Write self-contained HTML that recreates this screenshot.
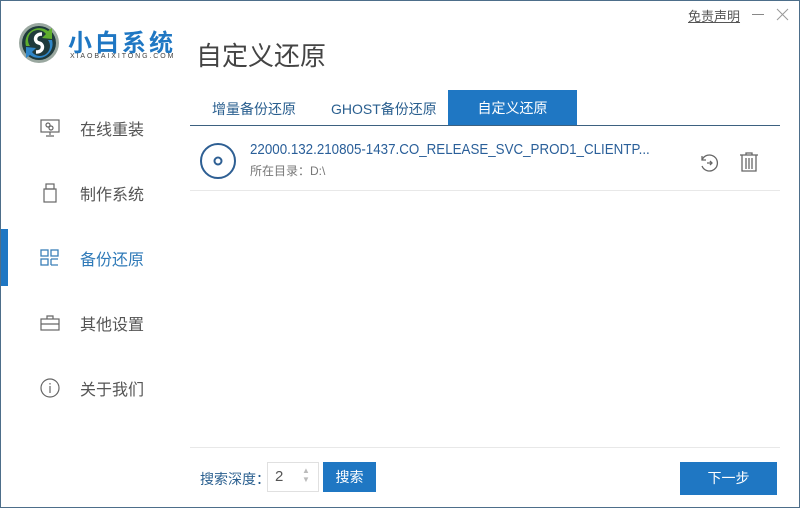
<!DOCTYPE html>
<html><head><meta charset="utf-8"><style>
*{margin:0;padding:0;box-sizing:border-box}
body{width:800px;height:508px;overflow:hidden;background:#fff;font-family:"Liberation Sans","Noto Sans CJK SC",sans-serif;position:relative}
.frame{position:absolute;left:0;top:0;width:800px;height:508px;border:1px solid #4d6e8a;pointer-events:none;z-index:10}
.a{position:absolute;white-space:nowrap}
.nav{font-size:16px;color:#555}
.ic{position:absolute}
</style></head><body>
<div class="frame"></div>
<svg class="ic" style="left:18px;top:22px" width="42" height="42" viewBox="0 0 42 42">
<circle cx="21" cy="21" r="20" fill="#9aa8a0"/>
<circle cx="21" cy="21" r="17" fill="#1f3a3c"/>
<path d="M8 24 A14 14 0 0 1 30 9 L34 6 L34 17 L24 16 L28 12 A10 10 0 0 0 12 24Z" fill="#5fae2e"/>
<path d="M34 18 A14 14 0 0 1 12 33 L8 36 L8 25 L18 26 L14 30 A10 10 0 0 0 30 18Z" fill="#2f86c8"/>
<path d="M24 12 C16 12 16 20 21 21 C26 22 26 30 18 30" stroke="#fff" stroke-width="3.5" fill="none"/>
</svg>
<div class="a" style="left:68px;top:23px;font-size:24px;color:#1f77c3;font-weight:bold;letter-spacing:3px">小白系统</div>
<div class="a" style="left:70px;top:53px;font-size:7px;color:#444;letter-spacing:1.9px">XIAOBAIXITONG.COM</div>
<div class="a" style="left:196px;top:36px;font-size:26px;color:#444">自定义还原</div>
<div class="a" style="left:688px;top:6px;font-size:13px;color:#555;text-decoration:underline">免责声明</div>
<div class="a" style="left:752px;top:14px;width:12px;height:1px;background:#888"></div>
<svg class="ic" style="left:776px;top:8px" width="13" height="13"><path d="M1 1L12 12M12 1L1 12" stroke="#999" stroke-width="1"/></svg>
<div class="a" style="left:0;top:229px;width:8px;height:57px;background:#1f77c3"></div>
<svg class="ic" style="left:40px;top:119px" width="20" height="18" viewBox="0 0 20 18" fill="none" stroke="#666" stroke-width="1.2"><rect x="1" y="1" width="18" height="12"/><path d="M10 13v3M6 17h8"/><circle cx="8" cy="6" r="2"/><circle cx="11" cy="9" r="2"/></svg>
<div class="a nav" style="left:80px;top:116px">在线重装</div>
<svg class="ic" style="left:43px;top:183px" width="14" height="20" viewBox="0 0 14 20" fill="none" stroke="#666" stroke-width="1.2"><rect x="3" y="1" width="8" height="5"/><rect x="1" y="6" width="12" height="13"/></svg>
<div class="a nav" style="left:80px;top:181px">制作系统</div>
<svg class="ic" style="left:40px;top:249px" width="20" height="18" viewBox="0 0 20 18" fill="none" stroke="#3a7fb8" stroke-width="1.3"><rect x="1" y="1" width="7" height="6"/><rect x="11" y="1" width="7" height="6"/><rect x="1" y="10" width="7" height="6"/><path d="M11 10h7M11 16h7M11 10v6"/></svg>
<div class="a nav" style="left:80px;top:246px;color:#2f7ab8">备份还原</div>
<svg class="ic" style="left:40px;top:315px" width="20" height="16" viewBox="0 0 20 16" fill="none" stroke="#666" stroke-width="1.2"><rect x="1" y="4" width="18" height="11"/><path d="M7 4V1h6v3M1 9h18"/></svg>
<div class="a nav" style="left:80px;top:311px">其他设置</div>
<svg class="ic" style="left:40px;top:378px" width="20" height="20" viewBox="0 0 20 20" fill="none" stroke="#666" stroke-width="1.2"><circle cx="10" cy="10" r="9"/><path d="M10 8v7M10 5v1.5"/></svg>
<div class="a nav" style="left:80px;top:376px">关于我们</div>
<div class="a" style="left:212px;top:99px;font-size:14px;color:#2a5f8f">增量备份还原</div>
<div class="a" style="left:331px;top:99px;font-size:14px;color:#2a5f8f">GHOST备份还原</div>
<div class="a" style="left:448px;top:90px;width:129px;height:35px;background:#1f77c3;color:#fff;font-size:14px;text-align:center;line-height:36px">自定义还原</div>
<div class="a" style="left:190px;top:125px;width:590px;height:1px;background:#3d6180"></div>
<svg class="ic" style="left:199px;top:142px" width="38" height="38" viewBox="0 0 38 38" fill="none" stroke="#2e5f93" stroke-width="2"><circle cx="19" cy="19" r="17"/><circle cx="19" cy="19" r="3.5"/></svg>
<div class="a" style="left:250px;top:141px;font-size:15px;color:#2a5f99;transform:scaleX(0.89);transform-origin:0 0">22000.132.210805-1437.CO_RELEASE_SVC_PROD1_CLIENTP...</div>
<div class="a" style="left:250px;top:162px;font-size:12px;color:#777">所在目录：D:\</div>
<svg class="ic" style="left:699px;top:153px" width="20" height="20" viewBox="0 0 20 20" fill="none" stroke="#666" stroke-width="1.3"><path d="M3 7A8 8 0 1 1 3 13"/><path d="M3 3v4h4"/><path d="M8 10h5M11 8l2 2-2 2"/></svg>
<svg class="ic" style="left:739px;top:152px" width="20" height="20" viewBox="0 0 20 20" fill="none" stroke="#666" stroke-width="1.3"><path d="M1 3h18M7 3V1h6v2M3 3v16h14V3M7 6v11M10 6v11M13 6v11"/></svg>
<div class="a" style="left:190px;top:190px;width:590px;height:1px;background:#e8e8e8"></div>
<div class="a" style="left:190px;top:447px;width:590px;height:1px;background:#e8e8e8"></div>
<div class="a" style="left:200px;top:469px;font-size:14px;color:#2a5f8f">搜索深度：</div>
<div class="a" style="left:267px;top:462px;width:52px;height:30px;border:1px solid #e0e0e0;font-size:15px;color:#555;padding:5px 0 0 7px">2</div>
<div class="a" style="left:302px;top:466px;font-size:8px;color:#bbb;line-height:9px">▲<br>▼</div>
<div class="a" style="left:323px;top:462px;width:53px;height:30px;background:#1f77c3;color:#fff;font-size:14px;text-align:center;line-height:30px">搜索</div>
<div class="a" style="left:680px;top:462px;width:97px;height:33px;background:#1f77c3;color:#fff;font-size:14px;text-align:center;line-height:33px">下一步</div>
</body></html>
